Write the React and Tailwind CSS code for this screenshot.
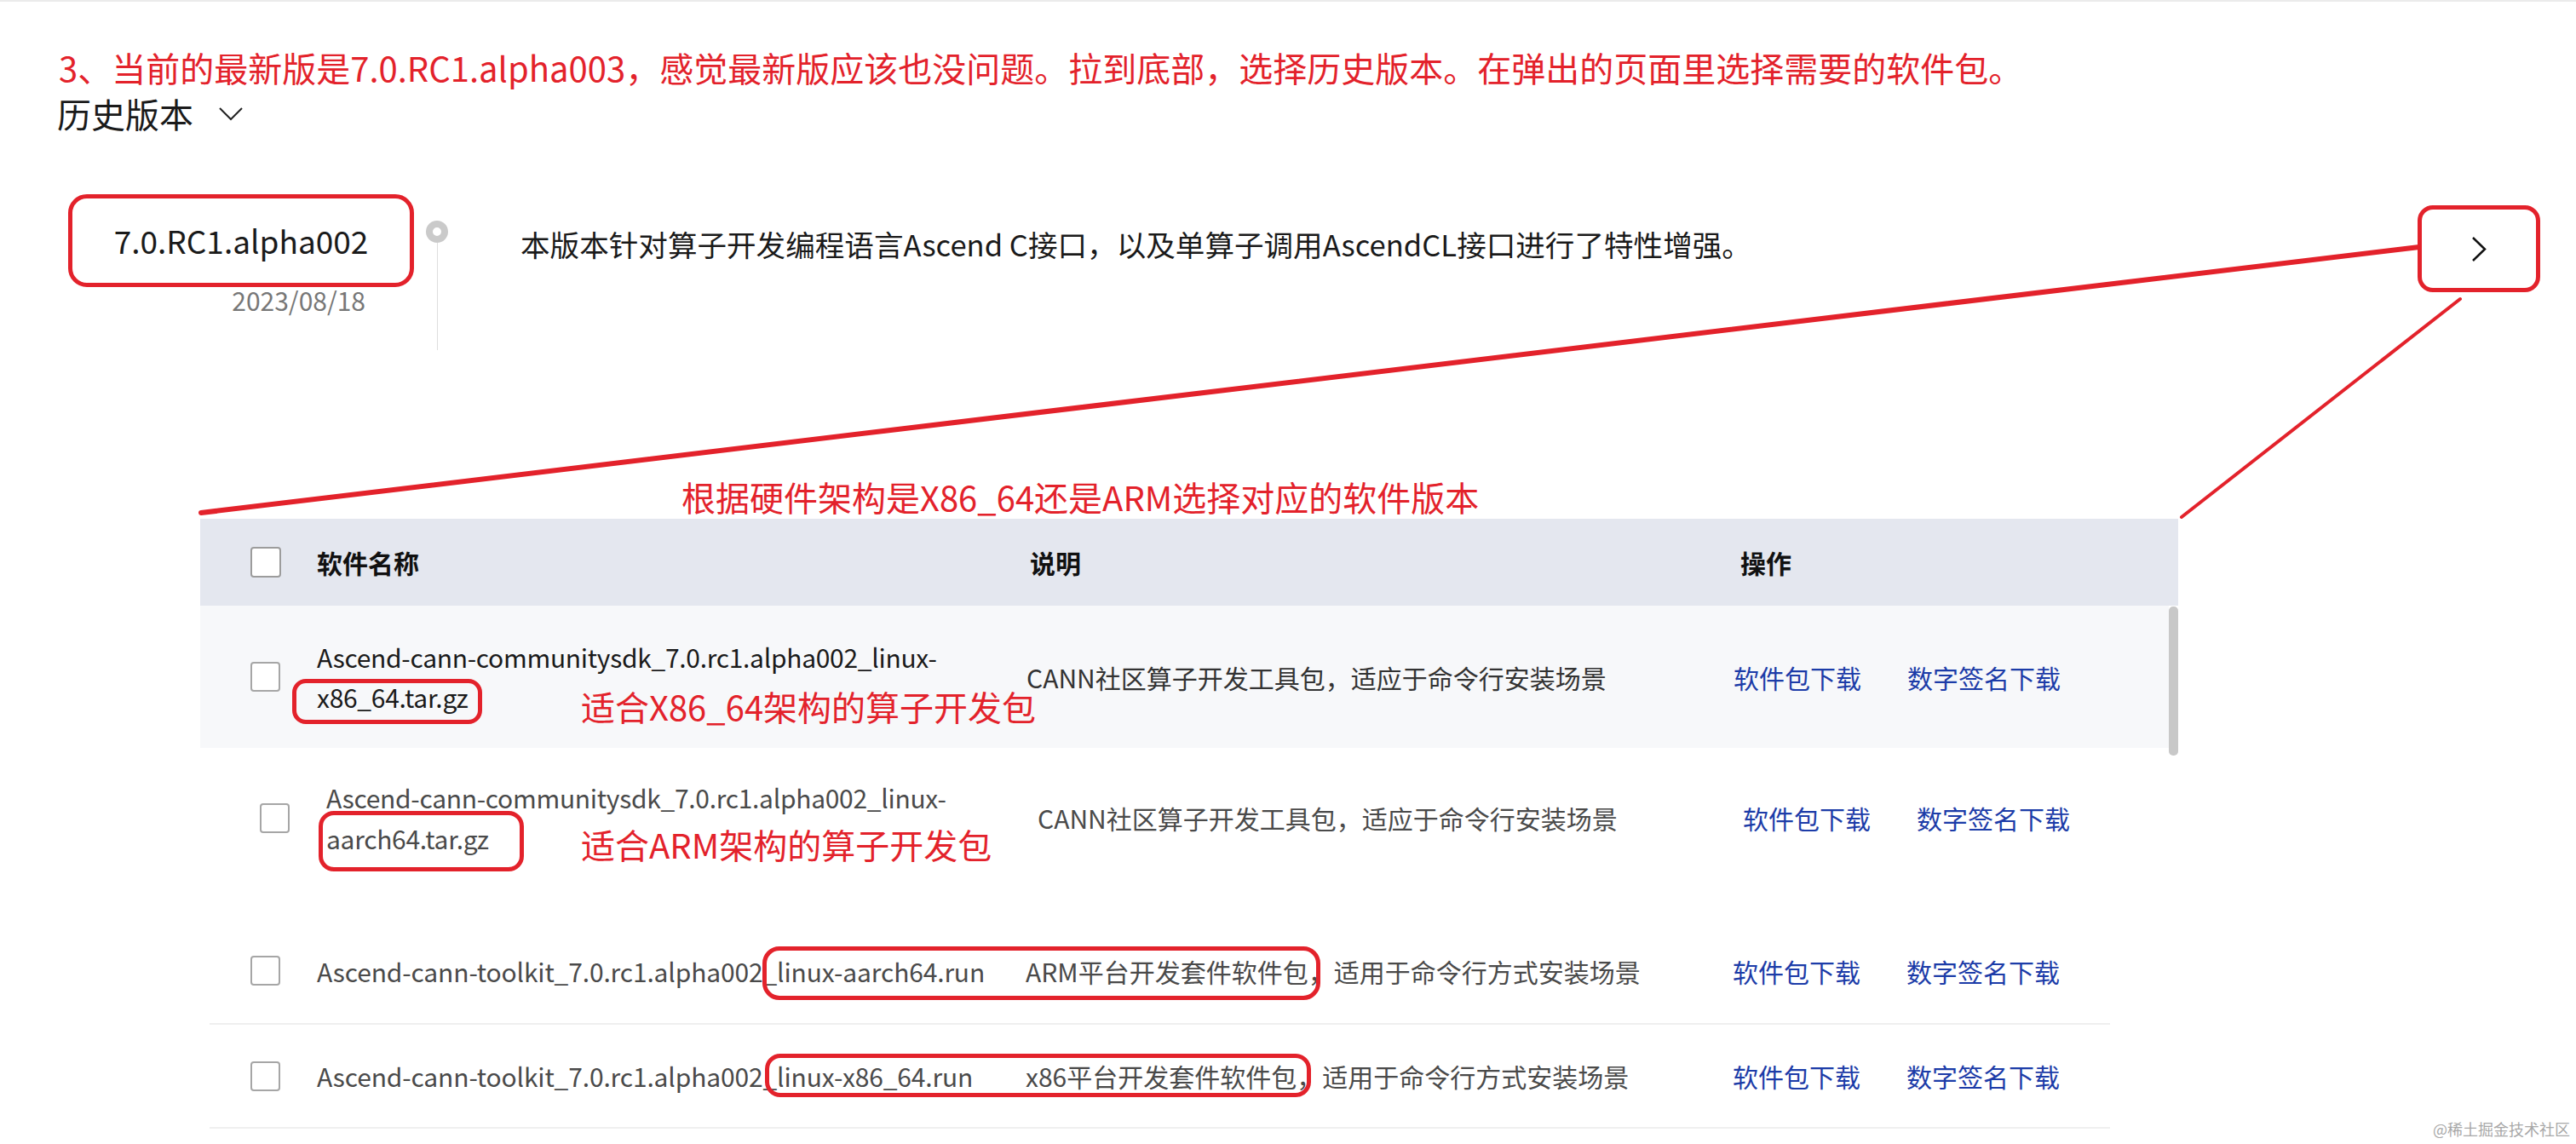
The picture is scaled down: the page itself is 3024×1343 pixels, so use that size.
const Checkbox = () => (
  <span className="block w-[35px] h-[35px] rounded-[4px] border-2 border-[#a6a6a6] bg-white" />
);

const Links = ({ className }) => (
  <div className={`flex gap-[54px] text-[30px] leading-[40px] text-[#1c3ca8] ${className || ""}`}>
    <span>软件包下载</span>
    <span>数字签名下载</span>
  </div>
);

export default function App() {
  return (
    <div className="relative w-[3024px] h-[1343px] overflow-hidden bg-white font-['Noto_Sans_CJK_SC',sans-serif] text-[#1a1a1a]">
      <div className="h-[2px] bg-[#ebebeb]" />

      <p className="mt-[53px] ml-[69px] text-[40px] leading-[48px] text-[#e3222b] whitespace-nowrap">
        3、当前的最新版是7.0.RC1.alpha003，感觉最新版应该也没问题。拉到底部，选择历史版本。在弹出的页面里选择需要的软件包。
      </p>

      <div className="mt-[6px] ml-[67px] flex items-center gap-[29px]">
        <span className="text-[40px] leading-[48px] text-[#1a1a1a]">历史版本</span>
        <svg width="30" height="17" viewBox="0 0 30 17" fill="none">
          <path d="M2 2 L15 15 L28 2" stroke="#222" strokeWidth="2" />
        </svg>
      </div>

      {/* version row */}
      <div className="mt-[71px] ml-[80px] mr-[42px] flex items-start">
        <div className="flex flex-col items-end">
          <div className="w-[406px] h-[109px] rounded-[22px] border-[5px] border-[#e3222b] flex items-center justify-center text-[37px] text-[#1a1a1a]">
            7.0.RC1.alpha002
          </div>
          <span className="mr-[57px] text-[30px] leading-[30px] text-[#777]">2023/08/18</span>
        </div>
        <div className="ml-[14px] mt-[31px] flex flex-col items-center">
          <span className="block w-[26px] h-[26px] rounded-full border-[8px] border-[#cacaca] bg-white" />
          <span className="block w-px h-[126px] bg-[#dedede]" />
        </div>
        <p className="ml-[85px] mt-[38px] text-[34.6px] leading-[40px] text-[#1a1a1a] whitespace-nowrap">
          本版本针对算子开发编程语言Ascend C接口，以及单算子调用AscendCL接口进行了特性增强。
        </p>
        <div className="ml-auto mt-[13px] w-[144px] h-[102px] rounded-[18px] border-[5px] border-[#e3222b] flex items-center justify-center">
          <svg width="18" height="31" viewBox="0 0 18 31" fill="none">
            <path d="M2 2 L16 15.5 L2 29" stroke="#111" strokeWidth="2.5" />
          </svg>
        </div>
      </div>

      <p className="mt-[148px] ml-[800px] text-[40px] leading-[48px] text-[#e3222b] whitespace-nowrap">
        根据硬件架构是X86_64还是ARM选择对应的软件版本
      </p>

      {/* table */}
      <div className="relative mt-[2px] ml-[235px] w-[2322px]">
        <div className="h-[102px] bg-[#e4e7ef] flex items-center text-[30px] font-bold text-[#111]">
          <div className="w-[137px] pl-[59px]">
            <span className="block w-[36px] h-[36px] rounded-[4px] border-2 border-[#9c9c9c] bg-white" />
          </div>
          <div className="w-[833px]">软件名称</div>
          <div className="w-[830px] pl-[4px]">说明</div>
          <div className="pl-[8px]">操作</div>
        </div>

        {/* row 1 */}
        <div className="relative w-[2311px] h-[167px] bg-[#f7f8fa] flex items-center">
          <div className="w-[137px] pl-[59px]">
            <Checkbox />
          </div>
          <div className="w-[833px] text-[30px] leading-[47px] tracking-[-0.3px] text-[#1a1a1a]">
            <div>Ascend-cann-communitysdk_7.0.rc1.alpha002_linux-</div>
            <div>x86_64.tar.gz</div>
          </div>
          <div className="w-[830px] text-[30px] leading-[40px] text-[#333]">
            CANN社区算子开发工具包，适应于命令行安装场景
          </div>
          <Links />
          <span className="absolute left-[108px] top-[86px] w-[223px] h-[53px] rounded-[16px] border-[5px] border-[#e3222b]" />
          <span className="absolute left-[447px] top-[94px] text-[40px] leading-[48px] text-[#e3222b] whitespace-nowrap">
            适合X86_64架构的算子开发包
          </span>
        </div>

        {/* row 2 */}
        <div className="relative h-[200px] pb-[36px] pl-[11px] flex items-center">
          <div className="w-[137px] pl-[59px]">
            <Checkbox />
          </div>
          <div className="w-[835px] text-[30px] leading-[48px] tracking-[-0.3px] text-[#4a4a4a]">
            <div>Ascend-cann-communitysdk_7.0.rc1.alpha002_linux-</div>
            <div>aarch64.tar.gz</div>
          </div>
          <div className="w-[828px] text-[30px] leading-[40px] text-[#4a4a4a]">
            CANN社区算子开发工具包，适应于命令行安装场景
          </div>
          <Links />
          <span className="absolute left-[139px] top-[74px] w-[241px] h-[71px] rounded-[18px] border-[5px] border-[#e3222b]" />
          <span className="absolute left-[447px] top-[89px] text-[40px] leading-[48px] text-[#e3222b] whitespace-nowrap">
            适合ARM架构的算子开发包
          </span>
        </div>

        {/* rows 3 and 4 */}
        <div className="ml-[11px] w-[2231px]">
          <div className="relative h-[125px] border-b-2 border-[#efefef] flex items-center">
            <div className="w-[126px] pl-[48px]">
              <Checkbox />
            </div>
            <div className="w-[832px] text-[30px] leading-[40px] tracking-[-0.15px] text-[#4a4a4a] whitespace-nowrap">
              Ascend-cann-toolkit_7.0.rc1.alpha002_linux-aarch64.run
            </div>
            <div className="w-[830px] text-[30px] leading-[40px] text-[#4a4a4a] whitespace-nowrap">
              ARM平台开发套件软件包，适用于命令行方式安装场景
            </div>
            <Links />
            <span className="absolute left-[649px] top-[33px] w-[655px] h-[63px] rounded-[20px] border-[5px] border-[#e3222b]" />
          </div>
          <div className="relative h-[122px] border-b-2 border-[#efefef] flex items-center">
            <div className="w-[126px] pl-[48px]">
              <Checkbox />
            </div>
            <div className="w-[832px] text-[30px] leading-[40px] tracking-[-0.15px] text-[#4a4a4a] whitespace-nowrap">
              Ascend-cann-toolkit_7.0.rc1.alpha002_linux-x86_64.run
            </div>
            <div className="w-[830px] text-[30px] leading-[40px] text-[#4a4a4a] whitespace-nowrap">
              x86平台开发套件软件包，适用于命令行方式安装场景
            </div>
            <Links />
            <span className="absolute left-[652px] top-[34px] w-[641px] h-[51px] rounded-[18px] border-[5px] border-[#e3222b]" />
          </div>
        </div>

        {/* scrollbar thumb */}
        <span className="absolute left-[2311px] top-[103px] w-[11px] h-[175px] rounded-[5px] bg-[#c8c8c8]" />
      </div>

      {/* annotation connector lines */}
      <svg className="absolute left-0 top-0 pointer-events-none" width="3024" height="1343">
        <line x1="2840" y1="290" x2="236" y2="602" stroke="#e3222b" strokeWidth="6" strokeLinecap="round" />
        <line x1="2888" y1="351" x2="2561" y2="607" stroke="#e3222b" strokeWidth="4" strokeLinecap="round" />
      </svg>

      <span className="absolute left-[2856px] top-[1313px] text-[18px] leading-[24px] text-[#a8a8a8] whitespace-nowrap">
        @稀土掘金技术社区
      </span>
    </div>
  );
}
